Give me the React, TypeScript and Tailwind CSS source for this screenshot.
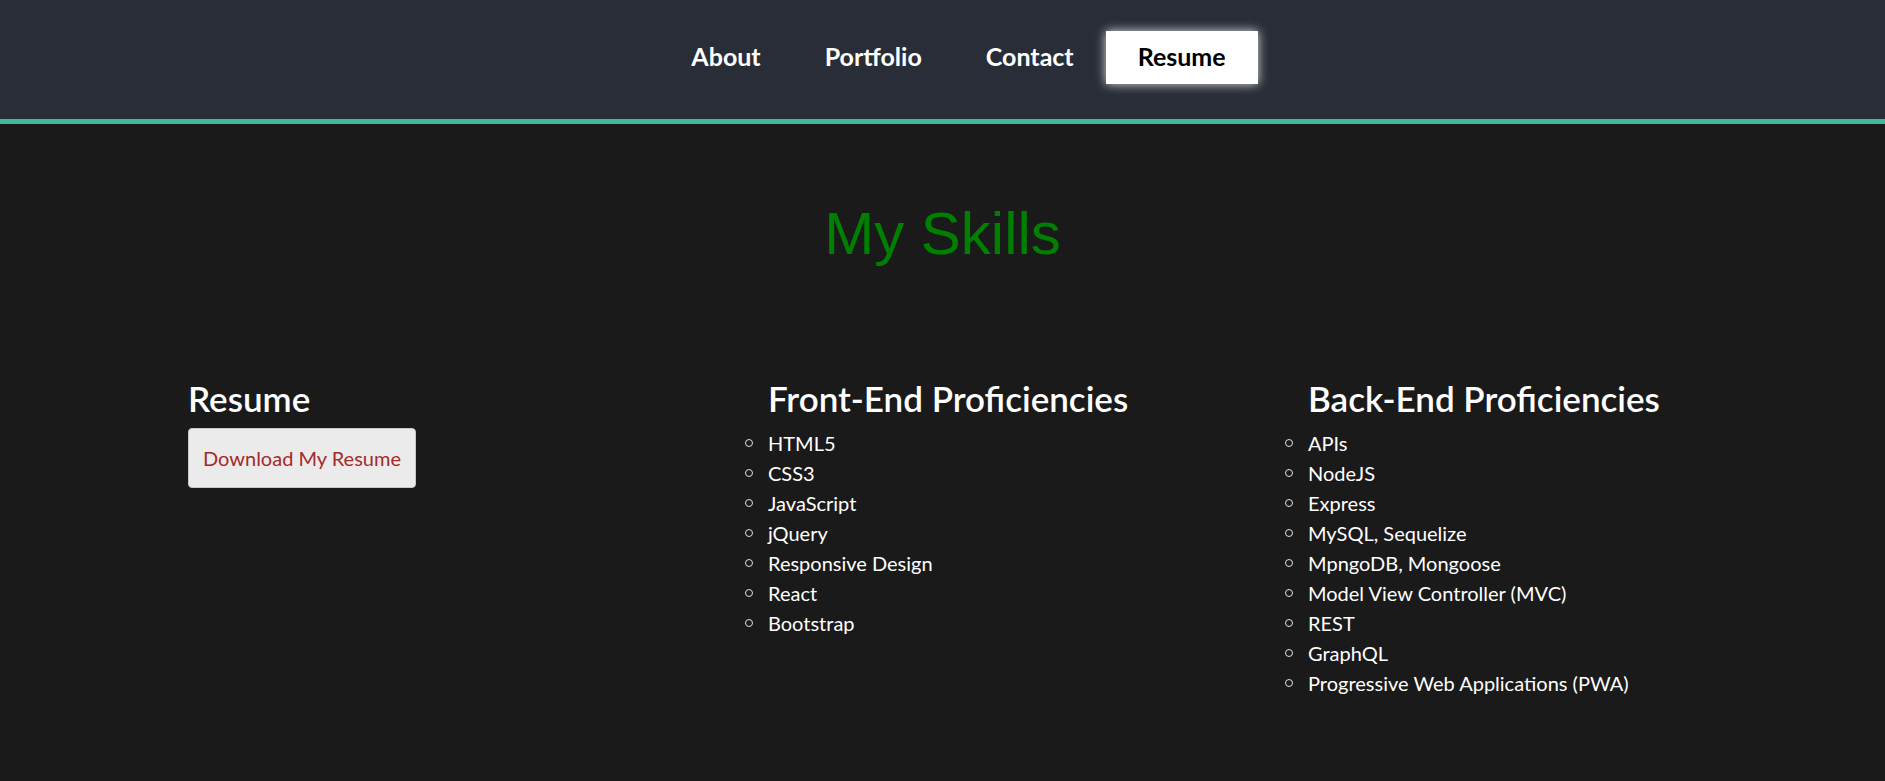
import React from "react";

const front = ["HTML5", "CSS3", "JavaScript", "jQuery", "Responsive Design", "React", "Bootstrap"];
const back = [
  "APIs",
  "NodeJS",
  "Express",
  "MySQL, Sequelize",
  "MpngoDB, Mongoose",
  "Model View Controller (MVC)",
  "REST",
  "GraphQL",
  "Progressive Web Applications (PWA)",
];

function SkillList({ items }: { items: string[] }) {
  return (
    <ul className="flex flex-col">
      {items.map((t) => (
        <li key={t} className="flex items-center text-[20px] leading-[30px] text-white">
          <span className="shrink-0 w-[8px] h-[8px] rounded-full border border-[#e0e0e0] -ml-[23px] mr-[15px]" />
          <span>{t}</span>
        </li>
      ))}
    </ul>
  );
}

export default function App() {
  const nav = ["About", "Portfolio", "Contact", "Resume"];
  return (
    <div className="min-h-screen bg-[#1a1a1a] font-['Lato',sans-serif]">
      <header className="h-[124px] bg-[#282d37] border-b-[5px] border-[#3dba9c] flex justify-center items-start pt-[31px] pl-[32px]">
        {nav.map((n) => (
          <a
            key={n}
            className={
              n === "Resume"
                ? "h-[53px] px-[32px] pb-[2px] flex items-center text-[25px] font-bold text-black bg-white shadow-[0_0_10px_rgba(255,255,255,0.85)]"
                : "h-[53px] px-[32px] pb-[2px] flex items-center text-[25px] font-bold text-white"
            }
          >
            {n}
          </a>
        ))}
      </header>
      <h1 className="mt-[74px] text-center text-[60px] leading-[72px] text-[#008000] font-['Liberation_Sans',Arial,sans-serif]">
        My Skills
      </h1>
      <section className="mt-[107px] pl-[188px] grid grid-cols-[580px_540px_1fr]">
        <div>
          <h2 className="text-[35px] leading-[42px] font-semibold text-white mb-[9px]">Resume</h2>
          <button className="h-[60px] px-[14px] whitespace-nowrap bg-[#ebebeb] border border-[#c8c8c8] rounded-[4px] text-[20px] text-[#a52a2a]">
            Download My Resume
          </button>
        </div>
        <div>
          <h2 className="text-[35px] leading-[42px] font-semibold text-white mb-[9px]">Front-End Proficiencies</h2>
          <SkillList items={front} />
        </div>
        <div>
          <h2 className="text-[35px] leading-[42px] font-semibold text-white mb-[9px]">Back-End Proficiencies</h2>
          <SkillList items={back} />
        </div>
      </section>
    </div>
  );
}
